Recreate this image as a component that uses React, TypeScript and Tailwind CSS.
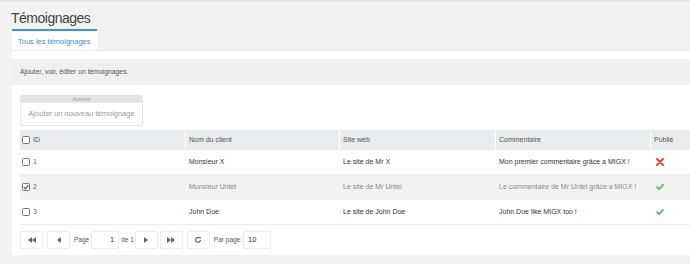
import React from 'react';

const rows = [
  { id: 1, nom: 'Monsieur X', site: 'Le site de Mr X', comment: 'Mon premier commentaire grâce a MIGX !', pub: false, checked: false },
  { id: 2, nom: 'Monsieur Untel', site: 'Le site de Mr Untel', comment: 'Le commentaire de Mr Untel grâce a MIGX !', pub: true, checked: true },
  { id: 3, nom: 'John Doe', site: 'Le site de John Doe', comment: 'John Doe like MIGX too !', pub: true, checked: false },
];

function Box({ checked }: { checked?: boolean }) {
  return (
    <svg width="8" height="8" viewBox="0 0 8 8" className="shrink-0">
      <rect x="0.5" y="0.5" width="7" height="7" rx="1" fill="white" stroke="#777" strokeWidth="1" />
      {checked && <path d="M1.8 4.2l1.6 1.6 3-3.6" fill="none" stroke="#555" strokeWidth="1.2" />}
    </svg>
  );
}

function Cross() {
  return (
    <svg width="8" height="8" viewBox="0 0 8 8">
      <path d="M1 1l6 6M7 1l-6 6" stroke="#e8473c" strokeWidth="2" strokeLinecap="round" />
    </svg>
  );
}

function Check() {
  return (
    <svg width="8" height="6" viewBox="0 0 9 7">
      <path d="M1 3.6l2.4 2.4L8 1" fill="none" stroke="#5cb85c" strokeWidth="2" strokeLinecap="round" strokeLinejoin="round" />
    </svg>
  );
}

function PagerBtn({ children, className = '' }: { children: React.ReactNode; className?: string }) {
  return (
    <div className={`flex h-[18px] w-[23px] items-center justify-center rounded-[2px] border border-[#ececec] bg-white ${className}`}>
      {children}
    </div>
  );
}

const Tri = ({ dir }: { dir: 'l' | 'r' }) => (
  <path d={dir === 'l' ? 'M4 0L0 3l4 3z' : 'M0 0l4 3-4 3z'} fill="#666" />
);

export default function App() {
  return (
    <div className="h-[264px] w-[690px] overflow-hidden border-t-2 border-[#e6e6e6] bg-[#f2f2f2] font-['Liberation_Sans',Arial,sans-serif] text-[#555]">
      <h1 className="pl-[11px] pt-[8px] text-[14px] leading-[16px] tracking-[-0.5px] text-[#444]">Témoignages</h1>

      <div className="mt-[3px] flex pl-[12px]">
        <div className="flex h-[21px] items-center border-t-2 border-[#3697d6] bg-white px-[6px] pt-[2px] text-[7.5px] text-[#3a8fd0]">
          Tous les témoignages
        </div>
      </div>

      <div className="ml-[12px] h-[205px] border-t border-[#e8e8e8] bg-white pt-[8px]">
        <div className="flex h-[26px] items-center bg-[#f0f0f0] px-[8px] text-[6.8px] text-[#555]">
          Ajouter, voir, éditer un témoignages.
        </div>

        <div className="ml-[8px] mt-[10px] flex h-[31px] w-[123px] flex-col rounded-[2px] border border-[#e4e4e4]">
          <div className="h-[7px] bg-[#e2e5e8] text-center text-[5.5px] leading-[7px] text-[#999]">Actions</div>
          <div className="flex flex-1 items-center justify-center text-[7.5px] text-[#999]">Ajouter un nouveau témoignage</div>
        </div>

        <div className="ml-[8px] mt-[4px] text-[7px]">
          <div className="grid h-[20px] grid-cols-[165px_154px_156px_155px_1fr] bg-[#e8ecef] text-[#555]">
            <div className="flex items-center gap-[3px] pl-[2px]">
              <Box />
              <span>ID</span>
            </div>
            <div className="flex items-center border-l border-white pl-[3px]">Nom du client</div>
            <div className="flex items-center border-l border-white pl-[3px]">Site web</div>
            <div className="flex items-center border-l border-white pl-[3px]">Commentaire</div>
            <div className="flex items-center border-l border-white pl-[3px]">Publié</div>
          </div>

          {rows.map((r) => (
            <div
              key={r.id}
              className={`grid h-[25px] grid-cols-[165px_154px_156px_155px_1fr] border-b border-[#ececec] ${r.checked ? 'bg-[#f2f2f2] text-[#888]' : 'bg-white text-[#333]'}`}
            >
              <div className="flex items-center gap-[3px] pl-[2px] text-[#666]">
                <Box checked={r.checked} />
                <span>{r.id}</span>
              </div>
              <div className="flex items-center pl-[4px]">{r.nom}</div>
              <div className="flex items-center pl-[4px]">{r.site}</div>
              <div className="flex items-center pl-[4px]">{r.comment}</div>
              <div className="flex items-center pl-[6px]">{r.pub ? <Check /> : <Cross />}</div>
            </div>
          ))}
        </div>

        <div className="ml-[8px] mt-[6px] flex items-center text-[6.5px] text-[#555]">
          <PagerBtn>
            <svg width="8" height="6" viewBox="0 0 8 6"><Tri dir="l" /><g transform="translate(4 0)"><Tri dir="l" /></g></svg>
          </PagerBtn>
          <PagerBtn className="ml-[4px]">
            <svg width="4" height="6" viewBox="0 0 4 6"><Tri dir="l" /></svg>
          </PagerBtn>
          <span className="ml-[4px]">Page</span>
          <div className="ml-[2px] flex h-[18px] w-[28px] items-center justify-end rounded-[2px] border border-[#ececec] pr-[4px] text-[7.5px] text-[#333]">1</div>
          <span className="ml-[2px]">de 1</span>
          <PagerBtn className="ml-[1px]">
            <svg width="4" height="6" viewBox="0 0 4 6"><Tri dir="r" /></svg>
          </PagerBtn>
          <PagerBtn className="ml-[2px]">
            <svg width="8" height="6" viewBox="0 0 8 6"><Tri dir="r" /><g transform="translate(4 0)"><Tri dir="r" /></g></svg>
          </PagerBtn>
          <PagerBtn className="ml-[4px]">
            <svg width="8" height="8" viewBox="0 0 10 10">
              <path d="M8 5a3 3 0 1 1-1-2.3" fill="none" stroke="#555" strokeWidth="1.4" />
              <path d="M6 0.8L8.6 1.2 8 3.8z" fill="#555" />
            </svg>
          </PagerBtn>
          <span className="ml-[4px]">Par page:</span>
          <div className="ml-[1px] flex h-[18px] w-[28px] items-center rounded-[2px] border border-[#ececec] pl-[4px] text-[7.5px] text-[#333]">10</div>
        </div>
      </div>
    </div>
  );
}
